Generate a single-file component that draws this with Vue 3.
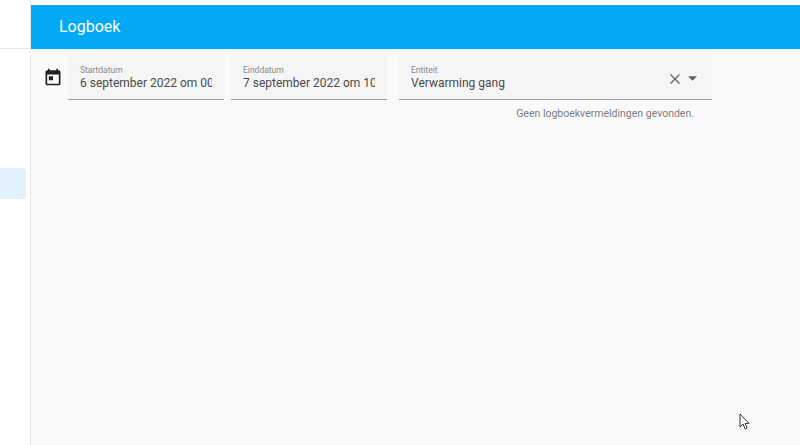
<script setup>
const dates = [
  { label: 'Startdatum', value: '6 september 2022 om 00:00' },
  { label: 'Einddatum', value: '7 september 2022 om 10:00' },
]
</script>

<template>
  <div class="page">
    <aside class="sidebar">
      <div class="side-top"></div>
      <div class="side-item"></div>
    </aside>
    <div class="main">
      <header class="topbar">Logboek</header>
      <section class="filters">
        <svg class="cal" viewBox="0 0 24 24" width="20" height="20">
          <path fill="#212121" d="M19 4h-1V2h-2v2H8V2H6v2H5c-1.11 0-1.99.9-1.99 2L3 20a2 2 0 0 0 2 2h14c1.1 0 2-.9 2-2V6c0-1.1-.9-2-2-2zm0 16H5V9h14v11zM7 11h5v5H7z" transform="translate(0 0)" />
        </svg>
        <div class="dates">
          <div v-for="d in dates" :key="d.label" class="field date">
            <span class="label">{{ d.label }}</span>
            <span class="value">{{ d.value }}</span>
          </div>
        </div>
        <div class="field entity">
          <span class="label">Entiteit</span>
          <span class="value">Verwarming gang</span>
          <svg class="clear" viewBox="0 0 12 12" width="12" height="12">
            <path d="M1.5 1.5l9 9M10.5 1.5l-9 9" stroke="#616161" stroke-width="1.2" fill="none" />
          </svg>
          <svg class="caret" viewBox="0 0 10 5" width="9" height="5">
            <path d="M0 0h10L5 5z" fill="#616161" />
          </svg>
        </div>
      </section>
      <p class="empty">Geen logboekvermeldingen gevonden.</p>
    </div>
    <svg class="cursor" viewBox="0 0 12 18" width="12" height="18">
      <path d="M1 1v13l3-3 2.2 5 2-1-2.2-4.6H10z" fill="#fff" stroke="#333" stroke-width="1" />
    </svg>
  </div>
</template>

<style>
html, body { margin: 0; background: #fff; }
</style>

<style scoped>
.page {
  position: relative;
  display: flex;
  width: 800px;
  height: 445px;
  overflow: hidden;
  font-family: Roboto, "Liberation Sans", sans-serif;
  background: #fff;
}
.sidebar {
  width: 30px;
  flex: none;
  border-right: 1px solid #e6e6e6;
  box-sizing: content-box;
}
.side-top {
  height: 48px;
  border-bottom: 1px solid #e6e6e6;
}
.side-item {
  width: 26px;
  height: 31px;
  margin-top: 119px;
  background: #e1f2fc;
  border-radius: 0 4px 4px 0;
}
.main {
  flex: 1;
  margin-top: 5px;
  background: #fafafa;
  display: flex;
  flex-direction: column;
}
.topbar {
  height: 44px;
  flex: none;
  box-sizing: border-box;
  padding-left: 28px;
  line-height: 44px;
  font-size: 16px;
  color: #fff;
  background: #03a9f4;
}
.filters {
  display: flex;
  align-items: flex-start;
  margin-top: 6px;
  padding-left: 12px;
}
.cal { margin-top: 12px; flex: none; }
.dates {
  display: flex;
  gap: 7px;
  margin-left: 5px;
}
.field {
  position: relative;
  display: flex;
  flex-direction: column;
  box-sizing: border-box;
  height: 45px;
  padding: 10px 12px 0;
  background: #f5f5f5;
  border-bottom: 1px solid #9e9e9e;
  border-radius: 3px 3px 0 0;
}
.date { width: 156px; }
.entity { width: 313px; margin-left: 12px; }
.label {
  font-size: 8.5px;
  line-height: 10px;
  color: #8a8a8a;
}
.value {
  font-size: 12px;
  line-height: 16px;
  color: #4a4a4a;
  white-space: nowrap;
  overflow: hidden;
}
.clear { position: absolute; left: 270px; top: 18px; }
.caret { position: absolute; left: 289px; top: 21px; }
.empty {
  margin: 7px 106px 0 0;
  text-align: right;
  font-size: 10.5px;
  line-height: 14px;
  color: #7d7d7d;
}
.cursor { position: absolute; left: 739px; top: 413px; }
</style>
